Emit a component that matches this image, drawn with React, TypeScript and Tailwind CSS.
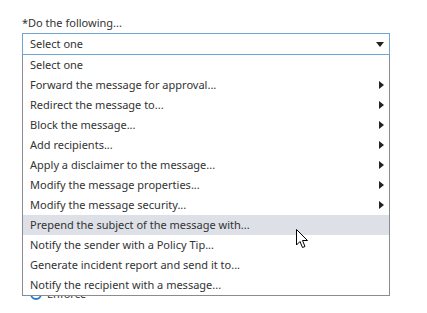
import React from "react";

type Option = { label: string; sub?: boolean };

const options: Option[] = [
  { label: "Select one" },
  { label: "Forward the message for approval...", sub: true },
  { label: "Redirect the message to...", sub: true },
  { label: "Block the message...", sub: true },
  { label: "Add recipients...", sub: true },
  { label: "Apply a disclaimer to the message...", sub: true },
  { label: "Modify the message properties...", sub: true },
  { label: "Modify the message security...", sub: true },
  { label: "Prepend the subject of the message with..." },
  { label: "Notify the sender with a Policy Tip..." },
  { label: "Generate incident report and send it to..." },
  { label: "Notify the recipient with a message..." },
];

const HOVER = 8;

function RightTri() {
  return (
    <svg width="5" height="8" viewBox="0 0 5 8" className="shrink-0">
      <path d="M0 0 L5 4 L0 8 Z" fill="#222" />
    </svg>
  );
}

function Cursor() {
  return (
    <svg
      width="13"
      height="20"
      viewBox="0 0 13 20"
      className="absolute left-[296px] top-[229px] z-30 pointer-events-none"
    >
      <path
        d="M0.5 0.5 L0.5 16 L4 12.5 L6.5 18.5 L9 17.5 L6.5 11.5 L11.5 11.5 Z"
        fill="#fff"
        stroke="#000"
        strokeWidth="1"
      />
    </svg>
  );
}

export default function App() {
  return (
    <div
      className="relative w-[427px] h-[313px] bg-white text-[#333] overflow-hidden"
      style={{ fontFamily: '"Noto Sans", "Open Sans", sans-serif' }}
    >
      <div className="pl-[22px] pt-[14px] w-[390px]">
        <div className="text-[11px] leading-[18px] h-[19px]">*Do the following...</div>

        <div className="relative">
          <div className="h-[22px] border border-[#6ea5d2] flex items-center justify-between pl-[7px] pr-[5px] text-[11px]">
            <span>Select one</span>
            <svg width="8" height="5" viewBox="0 0 8 5">
              <path d="M0 0 L8 0 L4 5 Z" fill="#222" />
            </svg>
          </div>

          <div className="mt-[232px] flex items-center gap-[5px] pl-[8px] text-[11px] h-[14px]">
            <span className="w-[12px] h-[12px] rounded-full border-[2px] border-[#2a7ad2]" />
            <span>Enforce</span>
          </div>

          <div className="absolute left-0 top-[22px] w-[368px] bg-white border border-[#8b8c90] border-t-0 z-10">
            {options.map((o, i) => (
              <div
                key={o.label}
                className={
                  "h-[20px] flex items-center justify-between pl-[7px] pr-[5px] text-[11px] " +
                  (i === HOVER ? "bg-[#dde0e6]" : "")
                }
              >
                <span>{o.label}</span>
                {o.sub && <RightTri />}
              </div>
            ))}
          </div>
        </div>
      </div>
      <Cursor />
    </div>
  );
}
